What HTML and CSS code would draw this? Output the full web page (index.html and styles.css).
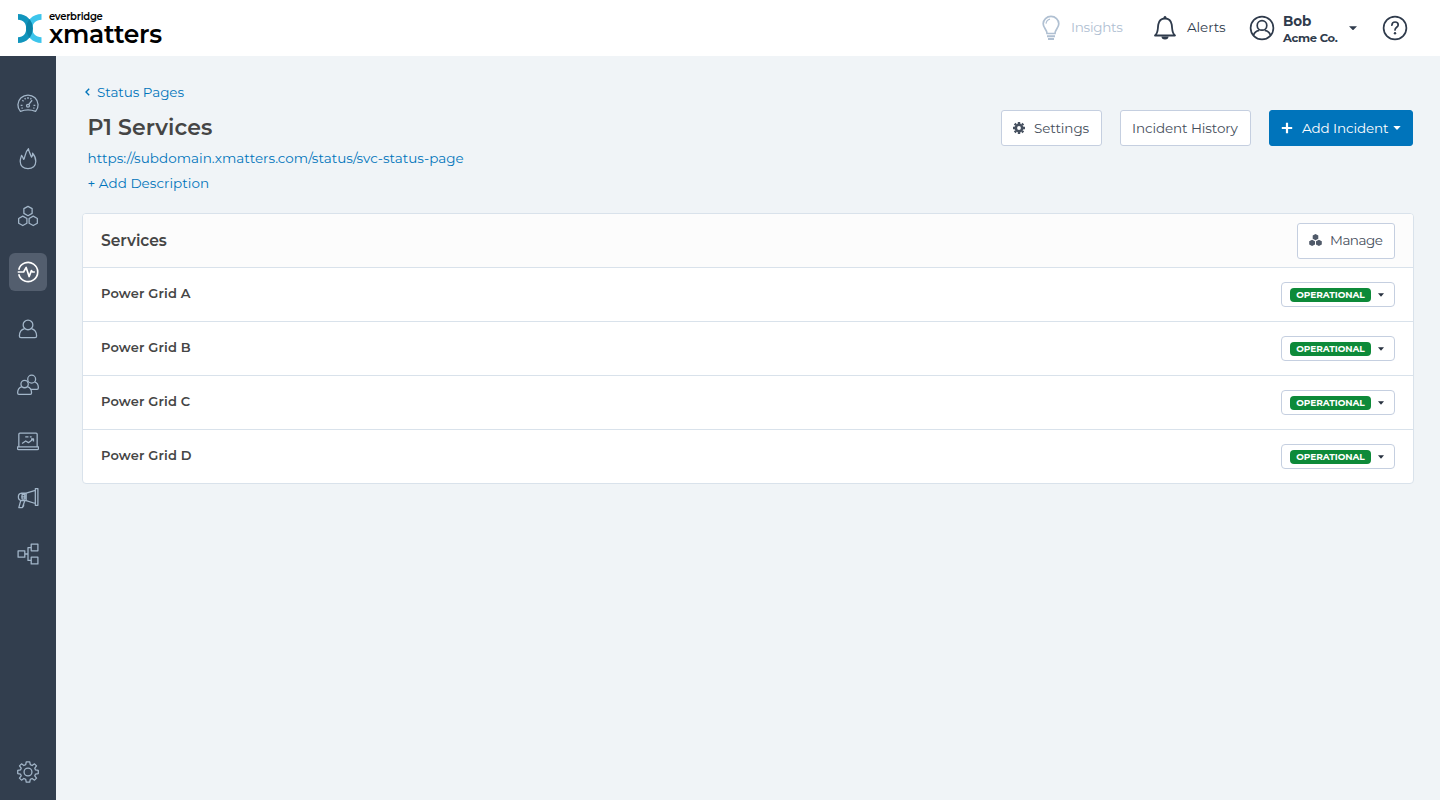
FILE: index.html
```html
<!DOCTYPE html>
<html lang="en">
<head>
<meta charset="utf-8">
<title>P1 Services</title>
<link rel="stylesheet" href="styles.css">
</head>
<body>
<header class="topbar">
  <a class="logo">
    <svg class="logo-mark" width="26" height="32" viewBox="0 0 26 32">
      <path d="M24.500 1C15.500 1 9 8 9 15.500S15.500 30 24.500 30V24.200C19 24 15.300 20.500 15.300 15.500S19 7 24.500 6.800Z" fill="#3dc5ec"/>
      <path d="M1 1C10 1 15.800 8 15.800 15.500S10 30 1 30V24.200C6.500 24 9.200 20.500 9.200 15.500S6.500 7 1 6.800Z" fill="#1195bd"/>
      <path d="M12.400 6Q15.800 10.500 15.800 15.500T12.400 25Q9.200 20.500 9.200 15.500T12.400 6Z" fill="#0a83a7"/>
    </svg>
    <span class="logo-text"><span class="logo-brand">everbridge</span><span class="logo-name">xmatters</span></span>
  </a>
  <nav class="top-nav">
    <a class="top-item insights">
      <svg width="18" height="26" viewBox="0 0 18 26" fill="none" stroke="currentColor" stroke-width="1.700"><path d="M5 18.500C5 14.500 1.200 13 1.200 8.800A7.800 7.400 0 0 1 16.800 8.800C16.800 13 13 14.500 13 18.500Z"/><path d="M4 8.700Q4.500 5 8 4.200" stroke-width="1.200"/><path d="M5 21.200H13M6 24H12" stroke-width="1.900"/></svg>
      <span>Insights</span>
    </a>
    <a class="top-item alerts">
      <svg width="24" height="26" viewBox="0 0 24 26" fill="none" stroke="currentColor" stroke-width="1.800" stroke-linejoin="round"><path d="M2 20.500C5.500 17.500 4.500 14 5.300 9.500C6 5.500 8.500 3.500 12 3.500S18 5.500 18.700 9.500C19.500 14 18.500 17.500 22 20.500Z"/><path d="M10.800 2.500A1.200 1.200 0 0 1 13.200 2.500V3.500H10.800Z" fill="currentColor" stroke-width=".6"/><path d="M8.500 21.500H15.500A3.500 3 0 0 1 8.500 21.500Z" fill="currentColor" stroke="none"/></svg>
      <span>Alerts</span>
    </a>
    <a class="top-item user">
      <svg width="26" height="26" viewBox="0 0 26 26" fill="none" stroke="currentColor" stroke-width="1.700"><circle cx="13" cy="13" r="11.400"/><circle cx="13" cy="10.400" r="4.800"/><path d="M4.500 20.500C5.300 17.200 7.300 15.800 10.200 15.300M15.800 15.300C18.700 15.800 20.700 17.200 21.500 20.500"/></svg>
      <span class="user-text"><b class="user-name">Bob</b><b class="user-org">Acme Co.</b></span>
      <svg class="user-caret" width="8" height="5" viewBox="0 0 8 5" fill="currentColor"><path d="M0 .2H8L4.600 3.800Q4 4.400 3.400 3.800Z"/></svg>
    </a>
    <a class="top-item help">
      <svg width="26" height="26" viewBox="0 0 26 26" fill="none" stroke="currentColor"><circle cx="13" cy="13" r="11.400" stroke-width="1.700"/><path d="M9.900 10.200C10 8 11.200 7 13.100 7S16.200 8.200 16.200 9.900C16.200 12.300 13 12.300 13 15" stroke-width="1.700" stroke-linecap="round"/><circle cx="13" cy="18.200" r="1.200" fill="currentColor" stroke="none"/></svg>
    </a>
  </nav>
</header>
<div class="body">
  <aside class="sidebar">
    <a class="side-item"><svg viewBox="0 0 24 24"><path d="M3.700 21.200A11 10.800 0 1 1 20.300 21.200Q12 18 3.700 21.200Z"/><path d="M4 14.500H6M18 14.500H20M5.800 9L7.200 10M12 5.500V7.500M8.500 6.500L9.300 8M15.500 6.500L14.700 8M12.900 13.500L16.500 9M5 17.800L6.200 17.200M19 17.800L17.800 17.200"/><circle cx="12" cy="15" r="1.600"/></svg></a>
    <a class="side-item"><svg viewBox="0 0 24 24"><path d="M12.500 .8C13 5 15 7 15.800 10C17 9 17.200 7.500 17 5.700C19.500 8.500 20.500 11.500 20.500 14.500C20.500 19.500 17 22.500 12 22.500S3.500 19.500 3.500 14.500C3.500 12 4.300 10 5 8C6.200 9.500 6.800 11 7.200 12.500C9.200 10.500 8 5 12.500 .8Z"/></svg></a>
    <a class="side-item"><svg viewBox="0 0 24 24"><path d="M12 1.500L16.500 4V9.200L12 11.700L7.500 9.200V4Z"/><path d="M6.300 12.200L10.800 14.700V19.900L6.300 22.400L1.800 19.900V14.700ZM17.700 12.200L22.200 14.700V19.900L17.700 22.400L13.200 19.900V14.700Z"/></svg></a>
    <a class="side-item active"><svg viewBox="0 0 24 24"><path d="M1.900 9.500A10.500 10.500 0 1 1 1.900 14.500M.8 12H7.200L10 7L13.200 17L15.700 10.500L17 12H19.500"/></svg></a>
    <a class="side-item"><svg viewBox="0 0 24 24"><circle cx="12" cy="7.500" r="5.300"/><path d="M8.300 11.500C4.500 12.500 2.600 15.200 2.600 19.700Q2.600 21.500 4.300 21.500H19.700Q21.400 21.500 21.400 19.700C21.400 15.200 19.500 12.500 15.700 11.500"/></svg></a>
    <a class="side-item"><svg viewBox="0 0 24 24"><circle cx="8.300" cy="11" r="4"/><path d="M5.300 13.700C2.200 14.700 .7 17 .7 20.500Q.7 22.200 2 22.200H14.500Q15.900 22.200 15.900 20.500C15.900 17 14.400 14.700 11.300 13.700"/><circle cx="16" cy="5.600" r="4.300"/><path d="M12 8.600L11.200 9M19.200 8.600C22 9.500 23.300 12 23.300 15Q23.300 16.700 21.800 16.700H15"/></svg></a>
    <a class="side-item"><svg viewBox="0 0 24 24"><path d="M2 18.500V4.700Q2 3.500 3.200 3.500H20.800Q22 3.500 22 4.700V18.500M.6 18.500H23.400V20.200Q23.400 21.500 22.200 21.500H1.800Q.6 21.500 .6 20.200ZM5.500 14.800L9.500 12L12.500 13.800L17.500 10M15.300 9.800H18V12.500M9 7.500H12.500M14 7.500H16"/></svg></a>
    <a class="side-item"><svg viewBox="0 0 24 24"><path d="M20 1.700H22.800V20H20ZM20 3.700L10 6.800V14.800L20 18M10 6.800H5Q1.500 7.300 1.500 10.800T5 14.800H10M5.500 8.300H8.500V13.200H5.500ZM4.500 10.800H8.500M4 15.100L2 22.500H5.800L8.500 15.100M5.800 22.500L7.200 20.500V18.300"/></svg></a>
    <a class="side-item"><svg viewBox="0 0 24 24"><path d="M1.200 8.500H8.500V15.500H1.200ZM15.500 1.200H22.800V8.500H15.500ZM15.500 15.500H22.800V22.800H15.500ZM8.500 12H12M15.500 5H12V19H15.500"/></svg></a>
    <a class="side-item settings"><svg viewBox="0 0 24 24"><path d="M10.100 1H13.900L14.500 4L16.500 4.900L19.100 3.100L21.300 5.300L19.400 7.800L20.200 9.800L23.200 10.300V13.700L20.200 14.200L19.400 16.200L21.300 18.700L19.100 20.900L16.500 19.100L14.500 20L13.900 23H10.100L9.500 20L7.500 19.100L4.900 20.900L2.700 18.700L4.600 16.200L3.800 14.200L.8 13.700V10.300L3.800 9.800L4.600 7.800L2.700 5.300L4.900 3.100L7.500 4.900L9.500 4Z"/><circle cx="12" cy="12" r="4.300"/></svg></a>
  </aside>
  <main class="main">
    <a class="back link"><svg width="5" height="8" viewBox="0 0 5 8" fill="none" stroke="currentColor" stroke-width="1.400"><path d="M4.200 .7L1 4L4.200 7.300"/></svg><span>Status Pages</span></a>
    <section class="page-head">
      <div class="page-info">
        <h1 class="page-title">P1 Services</h1>
        <a class="page-url link">https://subdomain.xmatters.com/status/svc-status-page</a>
        <a class="add-desc link">+ Add Description</a>
      </div>
      <div class="actions">
        <button class="btn btn-settings"><svg width="12" height="12" viewBox="0 0 12 12" fill="none" stroke="#46505f"><circle cx="6" cy="6" r="3.200" stroke-width="2.600"/><path d="M6 0V2M6 10V12M0 6H2M10 6H12M1.700 1.700L3 3M9 9L10.300 10.300M1.700 10.300L3 9M9 3L10.300 1.700" stroke-width="2.400"/></svg><span>Settings</span></button>
        <button class="btn btn-history"><span>Incident History</span></button>
        <button class="btn btn-add"><svg width="12" height="12" viewBox="0 0 12 12" stroke="#fff" stroke-width="2.200"><path d="M6 .8V11.200M.8 6H11.200"/></svg><span>Add Incident</span><svg class="btn-caret" width="8" height="4" viewBox="0 0 8 4" fill="#fff"><path d="M.3 0H7.700L4 4Z"/></svg></button>
      </div>
    </section>
    <section class="card">
      <div class="card-head">
        <h2 class="card-title">Services</h2>
        <button class="btn btn-manage"><svg width="13" height="12" viewBox="0 0 13 12" fill="#505a69"><path d="M6.500 0L9.300 1.500V4.700L6.500 6.200L3.700 4.700V1.500ZM3.100 5.800L6 7.300V10.500L3.100 12L.2 10.500V7.300ZM9.900 5.800L12.800 7.300V10.500L9.900 12L7 10.500V7.300Z"/></svg><span>Manage</span></button>
      </div>
      <div class="row"><span class="row-name">Power Grid A</span><button class="status"><span class="badge">OPERATIONAL</span><svg width="6" height="4" viewBox="0 0 6 4"><path d="M0 .3H6L3 3.700Z"/></svg></button></div>
      <div class="row"><span class="row-name">Power Grid B</span><button class="status"><span class="badge">OPERATIONAL</span><svg width="6" height="4" viewBox="0 0 6 4"><path d="M0 .3H6L3 3.700Z"/></svg></button></div>
      <div class="row"><span class="row-name">Power Grid C</span><button class="status"><span class="badge">OPERATIONAL</span><svg width="6" height="4" viewBox="0 0 6 4"><path d="M0 .3H6L3 3.700Z"/></svg></button></div>
      <div class="row"><span class="row-name">Power Grid D</span><button class="status"><span class="badge">OPERATIONAL</span><svg width="6" height="4" viewBox="0 0 6 4"><path d="M0 .3H6L3 3.700Z"/></svg></button></div>
    </section>
  </main>
</div>
</body>
</html>
```
FILE: styles.css
```css
* { box-sizing: border-box; }
body { margin: 0; height: 800px; overflow: hidden; display: flex; flex-direction: column; background: #f0f4f7; color: #454545; font: 13.5px/18px Montserrat, Gotham, Inter, sans-serif; }
svg { display: block; flex: none; }
h1, h2 { margin: 0; }
button { font: inherit; color: inherit; margin: 0; }
span, a, h1, h2, b { white-space: nowrap; }

.topbar { height: 56px; flex: none; background: #fff; display: flex; justify-content: space-between; padding-left: 17px; color: #2f3b4c; }
.logo { display: flex; color: #000; padding-top: 11px; }
.logo-mark { margin-top: 2px; }
.logo-text { display: flex; flex-direction: column; padding-left: 6px; }
.logo-brand { font-size: 10px; line-height: 11px; font-weight: 600; letter-spacing: -.25px; }
.logo-name { font-size: 25px; line-height: 24px; font-weight: 600; letter-spacing: -.3px; }
.top-nav { display: flex; }
.top-item { display: flex; align-items: center; letter-spacing: -.1px; padding-bottom: 1px; }
.top-item > span:last-child { padding-bottom: 1px; }
.insights { width: 112px; gap: 11px; color: #b0c0d2; padding-left: 1px; letter-spacing: -.3px; }
.alerts { width: 96px; gap: 10px; }
.user { width: 133px; gap: 8px; }
.user-text { display: flex; flex-direction: column; width: 58px; padding-top: 4px; }
.user-name { font-size: 13.5px; line-height: 17px; letter-spacing: -.1px; }
.user-org { font-size: 11.5px; line-height: 16px; letter-spacing: -.3px; }
.user-caret { margin-top: 2px; }
.help { width: 58px; }

.body { flex: 1; display: flex; min-height: 0; }
.sidebar { width: 56px; background: #323e4e; display: flex; flex-direction: column; align-items: center; gap: 18.400px; padding: 28px 0 9px; }
.side-item { width: 38px; height: 38px; border-radius: 6px; display: flex; align-items: center; justify-content: center; color: #a3b6c9; }
.side-item svg { width: 22px; height: 22px; fill: none; stroke: currentColor; stroke-width: 1.400; stroke-linejoin: round; }
.active { background: #535e6e; color: #fff; }
.side-item.active svg { stroke-width: 1.800; }
.settings { margin-top: auto; }

.main { flex: 1; padding: 27px 26px 0; }
.link { color: #0074bb; letter-spacing: .03px; }
.back { display: flex; align-items: center; gap: 7px; padding-left: 3px; height: 18px; letter-spacing: -.05px; }
.page-head { display: flex; justify-content: space-between; height: 112px; padding: 9px 1px 0 5.500px; }
.page-info { display: flex; flex-direction: column; }
.page-title { font-size: 22px; line-height: 36px; font-weight: 600; letter-spacing: .05px; }
.page-url { line-height: 18px; margin-top: 3px; }
.add-desc { margin-top: 7px; }
.actions { display: flex; gap: 18px; }
.btn { height: 36px; border: 1px solid #c5cfe0; border-radius: 3px; background: #fff; padding: 0 11px 1px; display: flex; align-items: center; letter-spacing: -.1px; color: #454e5b; }
.btn-settings { width: 101px; gap: 9px; }
.btn-history { width: 131px; }
.btn-add { width: 144px; background: #0074bb; border-color: #0074bb; color: #fff; gap: 9px; }
.btn-caret { margin-left: -5px; }
.btn-manage { width: 98px; gap: 8px; letter-spacing: -.5px; }

.card { background: #fff; border: 1px solid #d9e2eb; border-radius: 4px; overflow: hidden; }
.card-head { height: 53px; background: #fcfcfc; display: flex; align-items: center; justify-content: space-between; padding: 0 18px; }
.card-title { font-size: 15.5px; font-weight: 600; letter-spacing: -.05px; }
.row { height: 54px; border-top: 1px solid #d9e2eb; display: flex; align-items: center; justify-content: space-between; padding: 0 18px; }
.row-name { font-size: 13px; font-weight: 600; letter-spacing: .15px; padding-bottom: 3px; }
.status { width: 114px; height: 25px; border: 1px solid #c5cfe0; border-radius: 4px; background: #fff; padding: 0 8px; display: flex; align-items: center; gap: 7px; fill: #27313f; }
.badge { width: 81px; height: 14px; border-radius: 4px; background: #0d8a39; color: #fff; font-size: 9px; line-height: 14px; font-weight: 700; text-align: center; letter-spacing: -.05px; }
```
